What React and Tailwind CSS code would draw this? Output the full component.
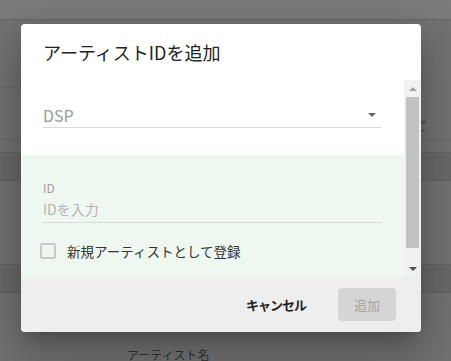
import React from "react";

export default function App() {
  const font = { fontFamily: '"Noto Sans CJK JP", "Noto Sans", sans-serif' };
  return (
    <div className="relative w-[451px] h-[361px] overflow-hidden bg-[#727272]" style={font}>
      {/* background page (dimmed) */}
      <div className="flex flex-col">
        <div className="h-[19px] bg-[#7b7b7b]" />
        <div className="h-px bg-[#666666]" />
        <div className="h-[66px]" />
        <div className="h-px w-[21px] bg-[#666666]" />
        <div className="h-[52px] relative">
          <svg className="absolute left-[419px] top-[34px]" width="8" height="10" viewBox="0 0 8 10">
            <rect x="0" y="0" width="7" height="1" fill="#4a4a4a" />
            <rect x="1" y="2" width="6" height="1" fill="#4a4a4a" />
            <rect x="0" y="9" width="5" height="1" fill="#4a4a4a" />
          </svg>
        </div>
        <div className="h-px bg-[#666666]" />
        <div className="h-[12px]" />
        <div className="h-[29px] bg-[#696969] border-y border-[#636363]" />
        <div className="h-[83px]" />
        <div className="h-[29px] bg-[#696969] border-y border-[#636363]" />
        <div className="pl-[127px] pt-[55px] text-[12px] leading-[14px] text-[#303030]">アーティスト名</div>
      </div>

      {/* dialog */}
      <div className="absolute left-[21px] top-[24px] w-[400px] h-[308px] rounded-[4px] bg-white overflow-hidden flex flex-col shadow-[0_11px_15px_-7px_rgba(0,0,0,0.2),0_24px_38px_3px_rgba(0,0,0,0.14),0_9px_46px_8px_rgba(0,0,0,0.12)]">
        <div className="h-[56px] px-[22px] flex items-center text-[18px] text-[#222222] pt-[1px]">
          アーティストIDを追加
        </div>
        <div className="h-[197px] flex">
          <div className="flex-1 flex flex-col overflow-hidden">
            <div className="h-[75px] shrink-0 bg-white px-[22px] pt-[23px]">
              <div className="h-[24px] flex items-center justify-between border-b border-[#dadada] box-content">
                <span className="text-[16px] text-[#9a9a9a]">DSP</span>
                <span className="mr-[6px] w-0 h-0 border-x-[4px] border-x-transparent border-t-[4px] border-t-[#666666]" />
              </div>
            </div>
            <div className="flex-1 bg-[#eef8f1] px-[22px] pt-[25px]">
              <div className="text-[12px] leading-[15px] text-[#9e9e9e]">ID</div>
              <div className="mt-[4px] pb-[3px] text-[14px] leading-[20px] text-[#b3b3b3] border-b border-[#dadada]">
                IDを入力
              </div>
              <div className="mt-[20px] -ml-[3px] flex items-center gap-[11px]">
                <span className="w-[16px] h-[16px] rounded-[2px] border-2 border-[#c9c9c9] box-border" />
                <span className="text-[13.5px] leading-[16px] text-[#333333]">新規アーティストとして登録</span>
              </div>
            </div>
          </div>
          <div className="w-[17px] bg-[#f1f1f1] flex flex-col">
            <div className="h-[17px] flex items-center justify-center">
              <span className="w-0 h-0 border-x-[4px] border-x-transparent border-b-[4px] border-b-[#a3a3a3]" />
            </div>
            <div className="mx-[2px] h-[151px] bg-[#c1c1c1]" />
            <div className="flex-1" />
            <div className="h-[17px] flex items-center justify-center">
              <span className="w-0 h-0 border-x-[4px] border-x-transparent border-t-[4px] border-t-[#505050]" />
            </div>
          </div>
        </div>
        <div className="flex-1 bg-[#eeeeee] flex items-center justify-end pr-[25px] gap-[32px]">
          <span className="text-[13px] font-bold tracking-[-1px] text-[#222222]">キャンセル</span>
          <div className="w-[58px] h-[33px] rounded-[4px] bg-[#d5d5d5] flex items-center justify-center text-[13px] text-[#a3a3a3]">
            追加
          </div>
        </div>
      </div>
    </div>
  );
}
